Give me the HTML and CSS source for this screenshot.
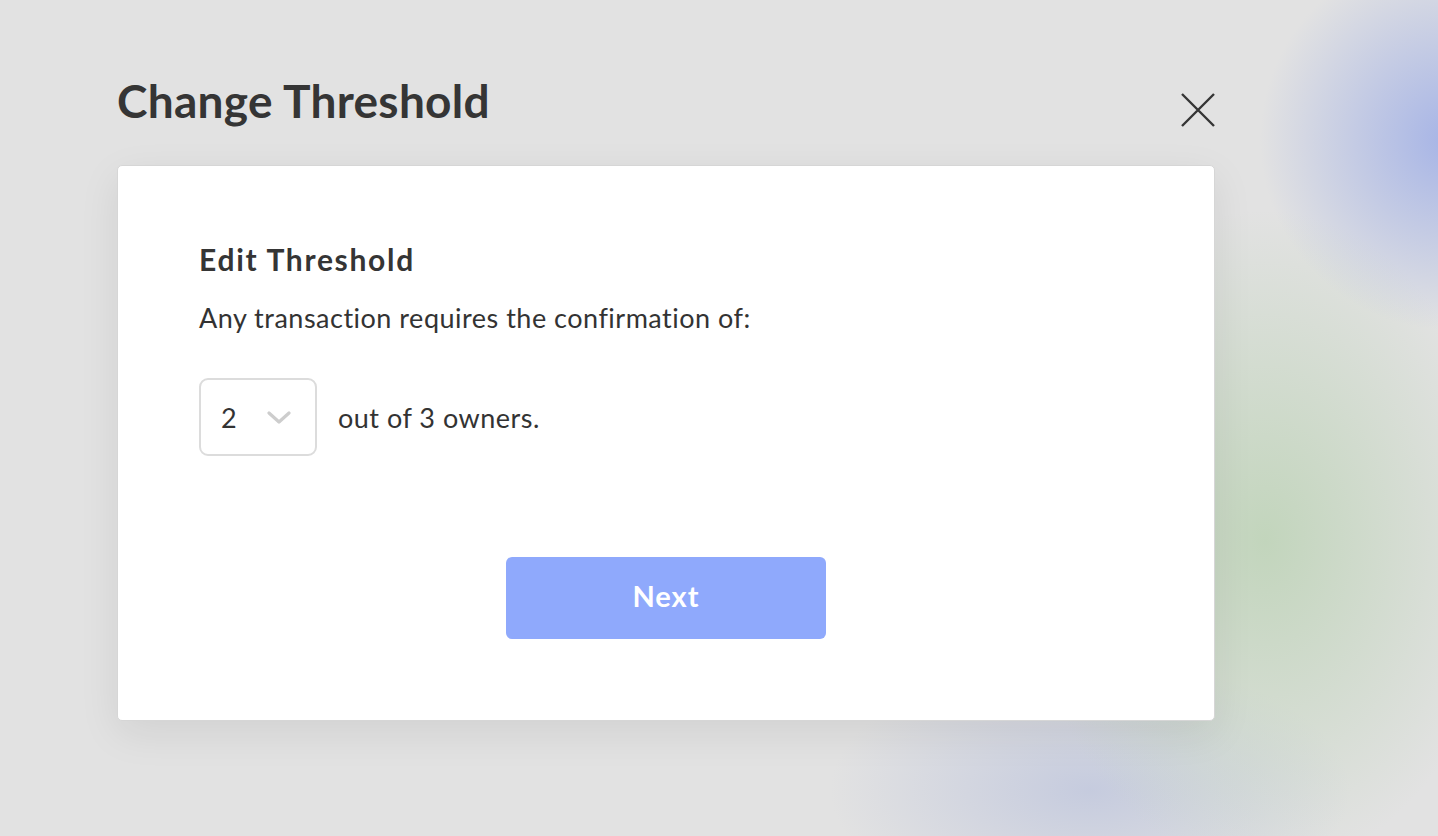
FILE: index.html
```html
<!DOCTYPE html>
<html lang="en">
<head>
    <meta charset="UTF-8">
    <meta name="viewport" content="width=device-width, initial-scale=1.0">
    <title>Change Threshold</title>
    <link rel="stylesheet" href="styles.css">
</head>
<body>
    <div class="modal">
        <div class="modal-header">
            <h1>Change Threshold</h1>
            <button class="close-button" aria-label="Close">
                <svg width="34" height="34" viewBox="0 0 34 34">
                    <path d="M1 1 L33 33 M33 1 L1 33" stroke="#353535" stroke-width="2.4" fill="none" />
                </svg>
            </button>
        </div>

        <div class="card">
            <h2>Edit Threshold</h2>
            <p class="description">Any transaction requires the confirmation of:</p>

            <div class="threshold-row">
                <div class="select-box">
                    <span class="select-value">2</span>
                    <svg class="chevron" width="24" height="14" viewBox="0 0 24 14">
                        <path d="M2 2 L12 11 L22 2" stroke="#cdcdcd" stroke-width="3.2" fill="none" stroke-linecap="round" stroke-linejoin="round" />
                    </svg>
                </div>
                <span class="owners">out of 3 owners.</span>
            </div>

            <div class="actions">
                <button class="next-button">Next</button>
            </div>
        </div>
    </div>
</body>
</html>
```

FILE: styles.css
```css
* {
    margin: 0;
    padding: 0;
    box-sizing: border-box;
}

body {
    font-family: Lato, "Open Sans", sans-serif;
    color: #333333;
    min-height: 836px;
    background-color: #e2e2e2;
    background-image:
        radial-gradient(circle 190px at 1450px 140px, rgba(166, 180, 230, 1), rgba(166, 180, 230, 0) 100%),
        radial-gradient(ellipse 240px 330px at 1265px 540px, rgba(194, 213, 188, 1), rgba(194, 213, 188, 0) 100%),
        radial-gradient(ellipse 260px 130px at 1090px 790px, rgba(196, 202, 222, 0.95), rgba(196, 202, 222, 0) 100%);
    background-repeat: no-repeat;
    overflow: hidden;
}

.modal {
    width: 1098px;
    margin-left: 117px;
    padding-top: 73px;
}

.modal-header {
    display: flex;
    justify-content: space-between;
    align-items: flex-start;
    margin-bottom: 36px;
}

h1 {
    font-size: 46px;
    line-height: 56px;
    font-weight: 700;
    letter-spacing: 0.3px;
    color: #353535;
}

.close-button {
    background: none;
    border: none;
    margin-top: 20px;
    width: 34px;
    height: 34px;
    cursor: pointer;
}

.close-button svg {
    display: block;
}

.card {
    background-color: #ffffff;
    border: 1px solid #d6d6d6;
    border-radius: 5px;
    box-shadow: 0 12px 40px rgba(0, 0, 0, 0.08);
    padding: 75px 81px 81px;
}

h2 {
    font-size: 30px;
    line-height: 36px;
    font-weight: 700;
    letter-spacing: 1.7px;
    color: #353535;
    margin-bottom: 23px;
}

.description {
    font-size: 27px;
    line-height: 36px;
    letter-spacing: 0.5px;
}

.threshold-row {
    display: flex;
    align-items: center;
    gap: 21px;
    margin-top: 42px;
}

.select-box {
    width: 118px;
    height: 78px;
    border: 2px solid #dcdcdc;
    border-radius: 9px;
    display: flex;
    align-items: center;
    justify-content: space-between;
    padding: 0 24px 0 20px;
}

.select-value {
    font-size: 27px;
}

.chevron {
    display: block;
    margin-top: 2px;
}

.owners {
    font-size: 27px;
    letter-spacing: 0.5px;
}

.actions {
    display: flex;
    justify-content: center;
    margin-top: 101px;
}

.next-button {
    width: 320px;
    height: 82px;
    border: none;
    border-radius: 6px;
    background-color: #8fa9fc;
    color: #ffffff;
    font-family: Lato, "Open Sans", sans-serif;
    font-size: 29px;
    font-weight: 700;
    letter-spacing: 1px;
    padding-bottom: 5px;
    cursor: pointer;
}
```
